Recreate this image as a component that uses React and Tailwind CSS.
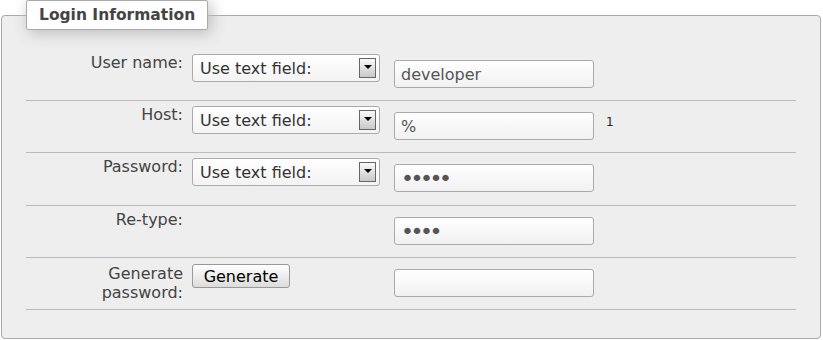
import React from 'react';

function FakeSelect() {
  return (
    <div className="w-[188px] h-[28px] mt-[5px] flex items-center justify-between pl-[7px] pr-[3px] border border-[#aaa] rounded-[3px] bg-gradient-to-b from-white to-[#f3f3f3] text-[16px] leading-[19px] text-[#333] shrink-0">
      <span>Use text field:</span>
      <span className="w-[17px] h-[20px] flex items-center justify-center border border-[#666] bg-gradient-to-b from-[#fafafa] to-[#c8c8c8]">
        <span className="w-0 h-0 border-l-[4px] border-r-[4px] border-t-[4px] border-l-transparent border-r-transparent border-t-black mb-[2px]" />
      </span>
    </div>
  );
}

function Field({ type = 'text', value = '' }) {
  const dots = type === 'password' ? 'text-[22px] tracking-[-3.5px] text-[#555]' : 'text-[16px] text-[#555]';
  return (
    <input
      type={type}
      readOnly
      defaultValue={value}
      className={`w-[200px] h-[28px] mt-[11px] px-[6px] border border-[#aaa] rounded-[3px] bg-gradient-to-b from-white to-[#f1f1f1] outline-none shrink-0 font-['DejaVu_Sans',sans-serif] ${dots}`}
    />
  );
}

function Row({ label, labelPad = 'pt-[4px]', h = 'h-[52px]', middle, value, type, note }) {
  return (
    <div className={`flex items-start border-b border-[#bbb] ${h}`}>
      <div className={`w-[157px] shrink-0 text-right text-[16px] leading-[19px] text-[#444] ${labelPad}`}>{label}</div>
      <div className="w-[188px] ml-[9px] shrink-0">{middle}</div>
      <div className="ml-[14px]">
        <Field type={type} value={value} />
      </div>
      {note && <div className="ml-[12px] mt-[12px] text-[12px] text-[#222]">{note}</div>}
    </div>
  );
}

export default function App() {
  return (
    <div className="w-[823px] h-[340px] bg-white font-['DejaVu_Sans',sans-serif] overflow-hidden">
      <fieldset className="ml-[1px] w-[820px] h-[339px] border border-[#aaa] rounded-[4px] bg-[#eee] px-[24px] pt-[19px] pb-[28px]">
        <legend className="h-[30px] px-[12px] leading-[28px] border border-[#aaa] rounded-[2px] bg-white text-[15.5px] font-bold text-[#444] shadow-[3px_3px_15px_#bbb]">
          Login Information
        </legend>

        <Row label="User name:" middle={<FakeSelect />} value="developer" />
        <Row label="Host:" middle={<FakeSelect />} value="%" note="1" />
        <Row label="Password:" h="h-[53px]" middle={<FakeSelect />} type="password" value="12345" />
        <Row label="Re-type:" type="password" value="1234" />
        <Row
          label={<>Generate<br />password:</>}
          labelPad="pt-[6px]"
          middle={
            <button className="mt-[6px] w-[98px] h-[24px] border border-[#999] rounded-[3px] bg-gradient-to-b from-white to-[#dcdcdc] text-[16px] leading-[19px] text-black">
              Generate
            </button>
          }
        />
      </fieldset>
    </div>
  );
}
